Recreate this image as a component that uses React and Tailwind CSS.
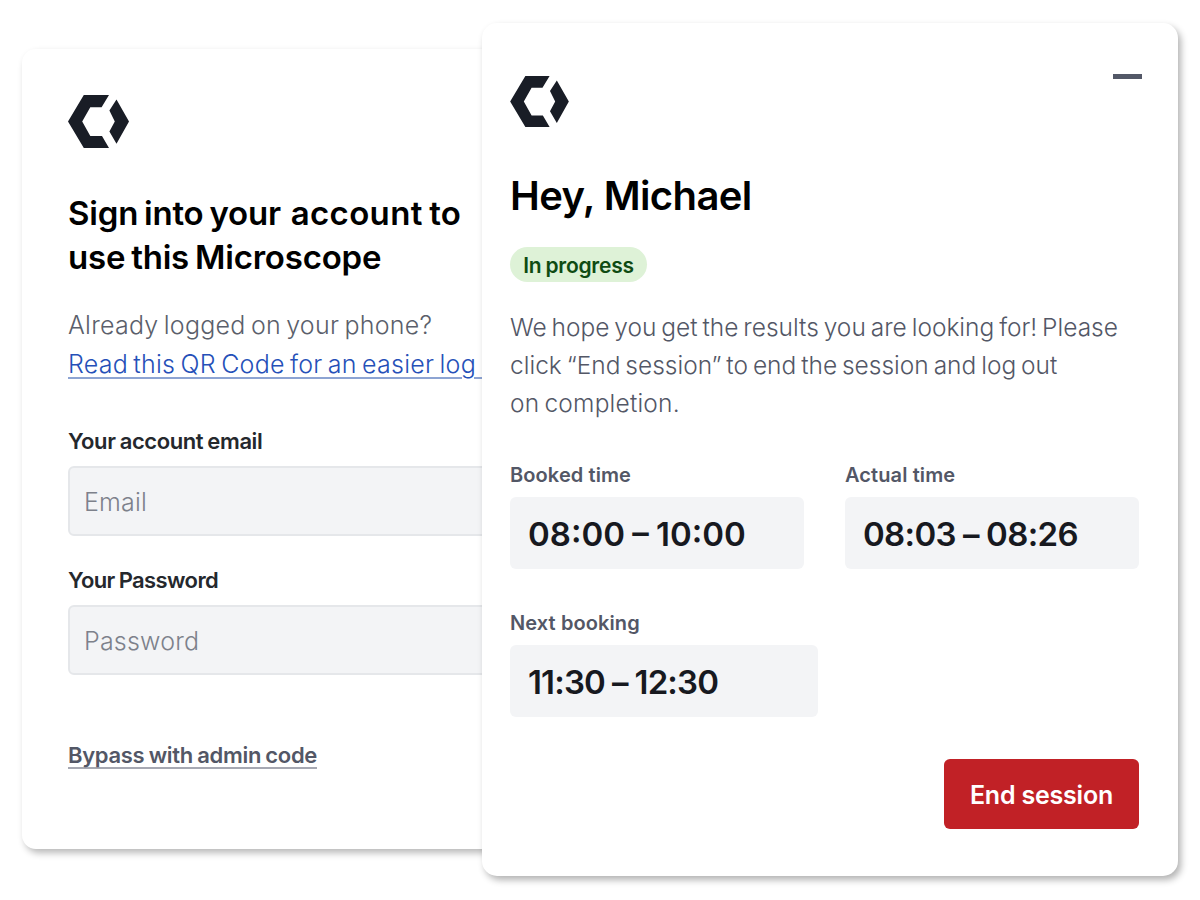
import React from 'react';

const Logo = ({ className }) => (
  <svg viewBox="0 0 61 53" className={className} fill="#191d26" aria-hidden="true">
    <path d="M0 26.5 15.8 0H41L33.6 12.3H22.3L14.2 26.5 22.3 41H34L41 53H15.8Z" />
    <path d="M48.5 4.6 61 26.5 48.5 48.8 41.4 36.6 46.8 26.5 41.4 15.6Z" />
  </svg>
);

const Field = ({ label, labelClass, placeholder, type }) => (
  <label className="block">
    <span
      className={`block h-[50px] text-[22px] leading-[50px] font-semibold [word-spacing:-1px] text-[#25282d] ${labelClass}`}
    >
      {label}
    </span>
    <input
      type={type}
      placeholder={placeholder}
      className="block h-[70px] w-full rounded-md border-2 border-[#e5e7ea] bg-[#f3f4f6] px-[14px] pt-px text-[25px] font-light tracking-[0.2px] placeholder:text-[#7d818b]"
    />
  </label>
);

const TimeSlot = ({ label, value, valueClass, className }) => (
  <div className={className}>
    <div className="h-[45px] text-[20px] leading-[47px] font-semibold tracking-[0.1px] text-[#535766]">{label}</div>
    <div
      className={`h-[72px] rounded-md bg-[#f3f4f6] pl-[18px] text-[33px] leading-[74px] font-semibold whitespace-nowrap text-[#17191f] ${valueClass}`}
    >
      {value}
    </div>
  </div>
);

const SignInCard = () => (
  <section className="mt-[49px] h-[800px] w-[520px] shrink-0 rounded-[14px] bg-white pt-[46px] pr-6 pl-[46px] shadow-[3px_4px_7px_rgba(0,0,0,0.28)]">
    <Logo className="h-[53px] w-[61px]" />
    <h1 className="mt-[43px] text-[33px] leading-[44px] font-semibold tracking-[-0.2px] [word-spacing:-2.2px] whitespace-nowrap text-black">
      Sign into your <span className="ml-[4px] tracking-[0.35px]">account to</span>
      <br />
      use this Microscope
    </h1>
    <p className="mt-[27px] text-[25px] leading-[39px] font-light tracking-[0.25px] [word-spacing:-2px] whitespace-nowrap text-[#5b5f6b]">
      Already logged on your phone?
      <br />
      <a href="#qr" className="text-[#2550b8] underline decoration-[#8da4d3] decoration-2 underline-offset-4">
        Read this QR Code for an easier log in
      </a>
    </p>
    <form className="mt-[32px] flex flex-col gap-[19px]">
      <Field label="Your account email" labelClass="tracking-[-0.4px]" placeholder="Email" type="email" />
      <Field label="Your Password" labelClass="tracking-[-0.6px]" placeholder="Password" type="password" />
    </form>
    <a
      href="#admin"
      className="mt-[69px] block w-fit border-b-2 border-[#a6a8b2] text-[22px] leading-[23px] font-semibold tracking-[-0.3px] [word-spacing:-1px] text-[#535766]"
    >
      Bypass with admin code
    </a>
  </section>
);

const SessionCard = () => (
  <section className="relative z-10 mt-[23px] -ml-[60px] h-[853px] w-[696px] shrink-0 rounded-[15px] bg-white pt-[53px] pr-[39px] pl-[28px] shadow-[3px_4px_7px_rgba(0,0,0,0.3)]">
    <div className="flex items-start justify-between">
      <Logo className="h-[51px] w-[59px]" />
      <button type="button" aria-label="Minimize" className="mt-[-2px] mr-[-3px] h-[5px] w-[29px] bg-[#535867]" />
    </div>
    <h2 className="mt-[44px] text-[40px] leading-[50px] font-semibold tracking-[-0.6px] text-black">
      Hey, Michael
    </h2>
    <div className="mt-[26px] flex">
      <span className="h-[35px] w-[137px] rounded-full bg-[#def2d7] text-center text-[21px] leading-[37px] font-semibold tracking-[-0.25px] [word-spacing:-1px] text-[#0f4b12]">
        In progress
      </span>
    </div>
    <p className="mt-[26px] text-[24.5px] leading-[38px] font-light [word-spacing:-2px] whitespace-nowrap text-[#535766]">
      We hope you get the results you are looking for! Please
      <br />
      click “End session” to end the session and log out
      <br />
      <span className="tracking-[0.2px]">on completion.</span>
    </p>
    <div className="mt-[30px] flex gap-[41px]">
      <TimeSlot
        label="Booked time"
        value="08:00 – 10:00"
        valueClass="[word-spacing:-1px]"
        className="w-[294px]"
      />
      <TimeSlot
        label="Actual time"
        value="08:03 – 08:26"
        valueClass="tracking-[-0.65px] [word-spacing:-0.5px]"
        className="w-[294px]"
      />
    </div>
    <TimeSlot
      label="Next booking"
      value="11:30 – 12:30"
      valueClass="tracking-[-0.85px] [word-spacing:-0.5px]"
      className="mt-[31px] w-[308px]"
    />
    <div className="mt-[42px] flex justify-end">
      <button
        type="button"
        className="h-[70px] w-[195px] rounded-md bg-[#c12126] pt-[3px] text-[25px] font-semibold tracking-[-0.2px] text-white"
      >
        End session
      </button>
    </div>
  </section>
);

const App = () => (
  <main className="flex h-[900px] w-[1200px] items-start overflow-hidden bg-white pl-[22px] font-['Inter',sans-serif]">
    <SignInCard />
    <SessionCard />
  </main>
);

export default App;
